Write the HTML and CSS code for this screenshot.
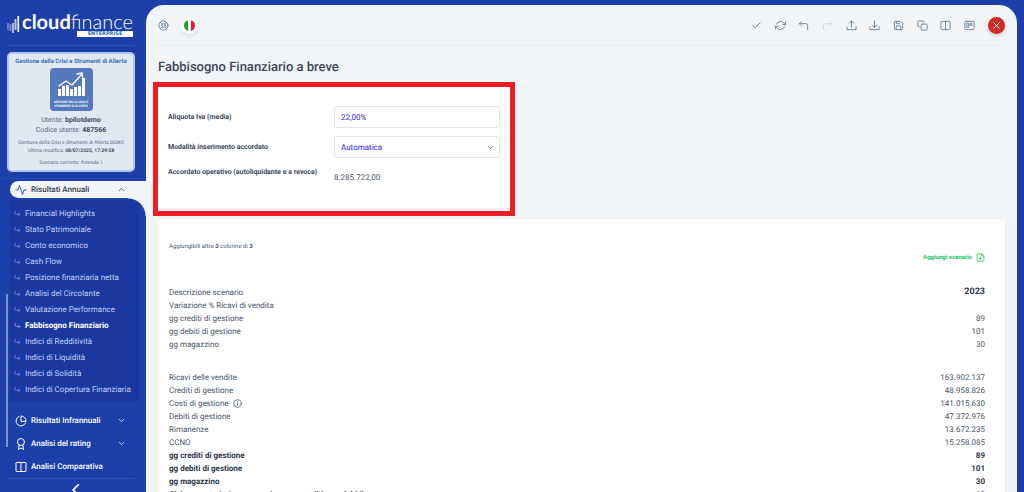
FILE: index.html
```html
<!DOCTYPE html>
<html lang="it">
<head>
    <meta charset="UTF-8">
    <meta name="viewport" content="width=device-width, initial-scale=1.0">
    <title>Fabbisogno Finanziario a breve - Cloudfinance</title>
    <link rel="stylesheet" href="styles.css">
</head>
<body>
    <!-- shared icon -->
    <svg width="0" height="0" class="defs">
        <symbol id="sub" viewBox="0 0 24 24"><path d="M15 10l5 5-5 5"/><path d="M4 4v7a4 4 0 0 0 4 4h12"/></symbol>
        <symbol id="down" viewBox="0 0 24 24"><path d="M6 9l6 6 6-6"/></symbol>
    </svg>

    <aside class="sidebar">
        <a href="#" class="logo">
            <svg class="logo-bars" viewBox="0 0 13 18">
                <g fill="#fff">
                    <rect x="0" y="7" width="2" height="7" opacity=".3"/>
                    <rect x="2.5" y="8" width="2" height="7" opacity=".4"/>
                    <rect x="5" y="7" width="2" height="10" opacity=".6"/>
                    <rect x="7.5" y="3" width="2" height="11" opacity=".7"/>
                    <rect x="10.5" y="0" width="1.6" height="16"/>
                </g>
            </svg>
            <span class="logo-name"><b>cloud</b>finance</span>
            <span class="logo-badge">ENTERPRISE</span>
        </a>

        <div class="user-card">
            <h2>Gestione della Crisi e Strumenti di Allerta</h2>
            <div class="product">
                <svg viewBox="0 0 43 30">
                    <g fill="#fff">
                        <rect x="8" y="21" width="3" height="7"/>
                        <rect x="12" y="18" width="3" height="10"/>
                        <rect x="16" y="17" width="3" height="11"/>
                        <rect x="20" y="21" width="3" height="7"/>
                        <rect x="24" y="19" width="3" height="9"/>
                        <rect x="28" y="18" width="3" height="10"/>
                        <rect x="32" y="10" width="3" height="18"/>
                    </g>
                    <path d="M9 18l7-5 6 4 10-11M27 6l5-1 1 6" fill="none" stroke="#fff" stroke-width="1.3"/>
                </svg>
                <span>GESTIONE DELLA CRISI E STRUMENTI DI ALLERTA</span>
            </div>
            <p class="user">Utente: <b>bpilotdemo</b><br>Codice utente: <b>487566</b></p>
            <p class="info">Gestione della Crisi e Strumenti di Allerta DEMO<br>Ultima modifica: <b>08/07/2025, 17:29:58</b></p>
            <p class="info">Scenario corrente: Azienda 1</p>
        </div>

        <nav class="menu">
            <a href="#" class="menu-item open">
                <svg class="icon" viewBox="0 0 24 24"><path d="M22 12h-4l-3 9L9 3l-3 9H2"/></svg>
                <span>Risultati Annuali</span>
                <svg class="arrow" viewBox="0 0 24 24"><path d="M6 15l6-6 6 6"/></svg>
            </a>
            <div class="submenu">
                <a href="#"><svg><use href="#sub"/></svg>Financial Highlights</a>
                <a href="#"><svg><use href="#sub"/></svg>Stato Patrimoniale</a>
                <a href="#"><svg><use href="#sub"/></svg>Conto economico</a>
                <a href="#"><svg><use href="#sub"/></svg>Cash Flow</a>
                <a href="#"><svg><use href="#sub"/></svg>Posizione finanziaria netta</a>
                <a href="#"><svg><use href="#sub"/></svg>Analisi del Circolante</a>
                <a href="#"><svg><use href="#sub"/></svg>Valutazione Performance</a>
                <a href="#" class="active"><svg><use href="#sub"/></svg>Fabbisogno Finanziario</a>
                <a href="#"><svg><use href="#sub"/></svg>Indici di Redditività</a>
                <a href="#"><svg><use href="#sub"/></svg>Indici di Liquidità</a>
                <a href="#"><svg><use href="#sub"/></svg>Indici di Solidità</a>
                <a href="#"><svg><use href="#sub"/></svg>Indici di Copertura Finanziaria</a>
            </div>
            <a href="#" class="menu-item">
                <svg class="icon" viewBox="0 0 24 24"><path d="M21.2 15.9A10 10 0 1 1 8 2.8"/><path d="M22 12A10 10 0 0 0 12 2v10z"/></svg>
                <span>Risultati Infrannuali</span>
                <svg class="arrow"><use href="#down"/></svg>
            </a>
            <a href="#" class="menu-item">
                <svg class="icon" viewBox="0 0 24 24"><circle cx="12" cy="8" r="7"/><path d="M8.2 13.9L7 23l5-3 5 3-1.2-9.1"/></svg>
                <span>Analisi del rating</span>
                <svg class="arrow"><use href="#down"/></svg>
            </a>
            <a href="#" class="menu-item">
                <svg class="icon" viewBox="0 0 24 24"><rect x="2" y="3" width="20" height="18" rx="1"/><path d="M12 3v18"/></svg>
                <span>Analisi Comparativa</span>
            </a>
            <div class="scrollbar"></div>
        </nav>
        <button class="collapse" aria-label="Riduci menu">
            <svg viewBox="0 0 24 24"><path d="M16 3l-9 9 9 9"/></svg>
        </button>
    </aside>

    <main class="content">
        <header class="topbar">
            <button aria-label="Aiuto">
                <svg viewBox="0 0 24 24"><circle cx="12" cy="12" r="10"/><circle cx="12" cy="12" r="4"/><path d="M4.9 4.9l4.3 4.3M14.8 14.8l4.3 4.3M14.8 9.2l4.3-4.3M4.9 19.1l4.3-4.3"/></svg>
            </button>
            <button class="flag" aria-label="Italiano"><span></span></button>
            <div class="tools">
                <button aria-label="Conferma"><svg viewBox="0 0 24 24"><path d="M20 6L9 17l-5-5"/></svg></button>
                <button aria-label="Aggiorna"><svg viewBox="0 0 24 24"><path d="M23 4v6h-6M1 20v-6h6"/><path d="M3.5 9a9 9 0 0 1 14.9-3.4L23 10M1 14l4.6 4.4A9 9 0 0 0 20.5 15"/></svg></button>
                <button aria-label="Annulla"><svg viewBox="0 0 24 24"><path d="M8 13L3 8l5-5"/><path d="M21 21v-9a4 4 0 0 0-4-4H3"/></svg></button>
                <button aria-label="Ripeti" disabled><svg viewBox="0 0 24 24"><path d="M16 13l5-5-5-5"/><path d="M3 21v-9a4 4 0 0 1 4-4h14"/></svg></button>
                <button aria-label="Carica"><svg viewBox="0 0 24 24"><path d="M22 15v6H2v-6M17 7l-5-5-5 5M12 2v14"/></svg></button>
                <button aria-label="Scarica"><svg viewBox="0 0 24 24"><path d="M22 15v6H2v-6M7 11l5 5 5-5M12 16V2"/></svg></button>
                <button aria-label="Salva"><svg viewBox="0 0 24 24"><path d="M19 21H5a2 2 0 0 1-2-2V5a2 2 0 0 1 2-2h11l5 5v11a2 2 0 0 1-2 2z"/><path d="M17 21v-8H7v8M7 3v5h8"/></svg></button>
                <button aria-label="Copia"><svg viewBox="0 0 24 24"><rect x="9" y="9" width="13" height="13" rx="2"/><path d="M5 15H4a2 2 0 0 1-2-2V4a2 2 0 0 1 2-2h9a2 2 0 0 1 2 2v1"/></svg></button>
                <button aria-label="Colonne"><svg viewBox="0 0 24 24"><rect x="2" y="3" width="20" height="18" rx="2"/><path d="M12 3v18"/></svg></button>
                <button aria-label="Bacheca"><svg viewBox="0 0 24 24"><rect x="2" y="3" width="20" height="18" rx="2"/><path d="M7 7h3v9H7zM14 7h3v5h-3z"/></svg></button>
            </div>
            <button class="close" aria-label="Chiudi"><svg viewBox="0 0 24 24"><path d="M18 6L6 18M6 6l12 12"/></svg></button>
        </header>

        <h1>Fabbisogno Finanziario a breve</h1>

        <form class="params">
            <label for="iva">Aliquota Iva (media)</label>
            <input type="text" id="iva" value="22,00%">
            <label for="modo">Modalità inserimento accordato</label>
            <div class="select">
                <select id="modo">
                    <option>Automatica</option>
                    <option>Manuale</option>
                </select>
                <svg><use href="#down"/></svg>
            </div>
            <label for="accordato">Accordato operativo (autoliquidante e a revoca)</label>
            <output id="accordato">8.285.722,00</output>
        </form>

        <section class="card">
            <p class="note">Aggiungibili altre <b>3</b> colonne di <b>3</b></p>
            <button class="add">Aggiungi scenario
                <svg viewBox="0 0 24 24"><path d="M15 2H5a2 2 0 0 0-2 2v16a2 2 0 0 0 2 2h14a2 2 0 0 0 2-2V8z"/><path d="M15 2v6h6M12 11v7M8.500 14.500h7"/></svg>
            </button>
            <table>
                <tbody>
                    <tr class="year"><th>Descrizione scenario</th><td>2023</td></tr>
                    <tr><th>Variazione % Ricavi di vendita</th><td></td></tr>
                    <tr><th>gg crediti di gestione</th><td>89</td></tr>
                    <tr><th>gg debiti di gestione</th><td>101</td></tr>
                    <tr><th>gg magazzino</th><td>30</td></tr>
                </tbody>
                <tbody>
                    <tr class="gap"><td colspan="2"></td></tr>
                    <tr><th>Ricavi delle vendite</th><td>163.902.137</td></tr>
                    <tr><th>Crediti di gestione</th><td>48.958.826</td></tr>
                    <tr><th>Costi di gestione <svg viewBox="0 0 24 24"><circle cx="12" cy="12" r="10"/><path d="M12 17v-6M12 8V7"/></svg></th><td>141.015.630</td></tr>
                    <tr><th>Debiti di gestione</th><td>47.372.976</td></tr>
                    <tr><th>Rimanenze</th><td>13.672.235</td></tr>
                    <tr><th>CCNO</th><td>15.258.085</td></tr>
                    <tr class="strong"><th>gg crediti di gestione</th><td>89</td></tr>
                    <tr class="strong"><th>gg debiti di gestione</th><td>101</td></tr>
                    <tr class="strong"><th>gg magazzino</th><td>30</td></tr>
                    <tr class="strong"><th>Ciclo monetario (gg magazzino + gg crediti - gg debiti)</th><td>18</td></tr>
                </tbody>
            </table>
        </section>
    </main>
</body>
</html>
```
FILE: styles.css
```css
* {
    box-sizing: border-box;
}
body {
    margin: 0;
    height: 100vh;
    display: flex;
    overflow: hidden;
    background-color: #1c3faa;
    font-family: Roboto, "Liberation Sans", sans-serif;
    font-size: 8px;
    line-height: 13px;
    color: #4a5568;
    text-rendering: geometricPrecision;
}
svg {
    fill: none;
    stroke: currentColor;
    stroke-width: 2;
    stroke-linecap: round;
    stroke-linejoin: round;
    flex-shrink: 0;
}
.defs {
    position: absolute;
}
a {
    color: inherit;
    text-decoration: none;
}
button {
    padding: 0;
    border: none;
    background: none;
    color: inherit;
    font: inherit;
    cursor: pointer;
    text-rendering: inherit;
}
h1, h2, p {
    margin: 0;
}

/* sidebar */
.sidebar {
    width: 146px;
    flex-shrink: 0;
    color: #fff;
    display: flex;
    flex-direction: column;
}
.sidebar > * {
    flex-shrink: 0;
}
.logo {
    position: relative;
    display: flex;
    height: 46px;
    margin: 0 11px 0 7px;
    padding-top: 12px;
    border-bottom: 1px solid #3151b3;
}
.logo-bars {
    width: 13px;
    height: 18px;
    margin-top: 4px;
    stroke: none;
}
.logo-name {
    margin-left: 2px;
    font-family: Lato, sans-serif;
    font-size: 20px;
    line-height: 20px;
    font-weight: 300;
}
.logo-name b {
    font-weight: 700;
}
.logo-badge {
    position: absolute;
    right: 2px;
    bottom: 8px;
    width: 56px;
    background: #fff;
    color: #1c6fb5;
    font: bold 5px/6px "DejaVu Sans", sans-serif;
    text-align: center;
}
.user-card {
    margin: 6px 11px 6px 7px;
    height: 120px;
    padding: 2px 0;
    border: 2px solid #b3c3fb;
    border-radius: 5px;
    background: #e2e8f0;
    color: #5c6a80;
    text-align: center;
    white-space: nowrap;
}
.user-card h2 {
    font-size: 6px;
    line-height: 12px;
    font-weight: 700;
    color: #3575b5;
}
.product {
    display: flex;
    flex-direction: column;
    width: 43px;
    height: 43px;
    margin: 0 auto 4px;
    border-radius: 4px;
    background: #5479bd;
    color: #fff;
    white-space: normal;
}
.product svg {
    width: 43px;
    height: 30px;
    stroke: none;
}
.product span {
    font-size: 3px;
    line-height: 4px;
    font-weight: 700;
    padding-top: 2px;
}
.user {
    font-size: 7px;
    line-height: 10px;
}
.user b, .info b {
    color: #3f4b5e;
}
.info {
    margin-top: 4px;
    font-size: 5px;
    line-height: 8px;
}
.menu {
    position: relative;
    padding: 2px 0 0 10px;
    border-top: 1px solid #2848ae;
    font-size: 8px;
}
.menu-item {
    display: flex;
    align-items: center;
    height: 23px;
    padding-left: 5px;
    font-weight: 500;
}
.menu-item span {
    width: 86px;
    margin-left: 4px;
}
.menu-item .icon {
    width: 12px;
    height: 12px;
}
.menu-item .arrow {
    width: 9px;
    height: 9px;
}
.menu-item.open {
    position: relative;
    height: 17px;
    border-radius: 9px 0 0 9px;
    background: #f1f5f8;
    color: #2d3748;
}
.menu-item.open .icon {
    color: #3056c9;
}
/* rounded join between the open tab and the page */
.menu-item.open::after {
    content: "";
    position: absolute;
    right: 0;
    top: 100%;
    width: 18px;
    height: 18px;
    background: radial-gradient(circle at 0 100%, transparent 17px, #f1f5f8 18px);
}
.submenu {
    margin: 2px 7px 7px 0;
    padding: 5px 0;
    border-radius: 3px;
    background: #1b38a0;
    color: #c3cff4;
}
.submenu a {
    display: flex;
    align-items: center;
    height: 16px;
    padding-left: 4px;
}
.submenu svg {
    width: 7px;
    height: 7px;
    margin-right: 4px;
    opacity: .7;
}
.submenu .active {
    color: #fff;
    font-weight: 700;
}
.scrollbar {
    position: absolute;
    left: 6px;
    top: 115px;
    width: 2px;
    height: 153px;
    background: #7b90d0;
}
.collapse {
    margin: 0 11px 0 7px;
    padding: 4px 0 0 10px;
    border-top: 1px solid #3151b3;
}
.collapse svg {
    width: 14px;
    height: 14px;
    stroke-width: 3;
}

/* page */
.content {
    flex: 1;
    display: flex;
    flex-direction: column;
    min-width: 0;
    margin: 5px 7px 0 0;
    padding: 0 12px;
    border-radius: 18px 18px 0 0;
    background: #f1f5f8;
}
.topbar {
    display: flex;
    align-items: center;
    height: 41px;
    flex-shrink: 0;
    border-bottom: 1px solid #e9eef2;
    color: #64839b;
}
.topbar button {
    display: flex;
    align-items: center;
    justify-content: center;
}
.topbar svg {
    width: 11px;
    height: 11px;
}
.topbar .flag {
    width: 17px;
    height: 17px;
    margin-left: 12px;
    border-radius: 50%;
    background: #fff;
    box-shadow: 0 2px 4px rgba(0, 0, 0, 0.1);
}
.flag span {
    width: 11px;
    height: 11px;
    border-radius: 50%;
    background: linear-gradient(to right, #17a61f 4px, #fff 4px 7px, #f5103b 7px);
}
.tools {
    display: flex;
    justify-content: space-between;
    width: 224px;
    margin-left: auto;
}
.tools button:disabled {
    opacity: .25;
}
.topbar .close {
    width: 17px;
    height: 17px;
    margin-left: 13px;
    border-radius: 50%;
    background: #d32929;
    color: #fff;
    box-shadow: 0 2px 4px rgba(0, 0, 0, 0.15);
}
h1 {
    margin: 13px 0 6px;
    font-size: 13px;
    line-height: 17px;
    font-weight: 500;
    color: #3c4759;
}
.params {
    display: grid;
    grid-template-columns: 166px 166px;
    grid-template-rows: 22px 22px 22px;
    row-gap: 8px;
    align-items: center;
    align-self: flex-start;
    width: 362px;
    height: 134px;
    margin: 0 0 3px -5px;
    padding: 19px 10px;
    border: 5px solid #ee1c25;
    background: #fff;
    box-shadow: inset 0 -3px #edf1f4;
    flex-shrink: 0;
}
.params label {
    font-size: 7px;
    font-weight: 700;
    color: #3c4759;
    white-space: nowrap;
}
.params label:nth-of-type(3) {
    align-self: start;
}
.params input, .params select {
    width: 100%;
    height: 22px;
    padding: 0 6px;
    border: 1px solid #dde3ea;
    border-radius: 3px;
    background: #fff;
    color: #2b22ee;
    font: inherit;
    text-rendering: inherit;
    appearance: none;
}
.select {
    position: relative;
}
.select svg {
    position: absolute;
    right: 5px;
    top: 7px;
    width: 9px;
    height: 9px;
}
.card {
    flex: 1;
    display: flex;
    flex-direction: column;
    padding: 21px 20px 0 11px;
    border-radius: 3px 3px 0 0;
    background: #fff;
    box-shadow: 0 1px 8px rgba(0, 0, 0, 0.04);
}
.note {
    font-size: 6px;
}
.add {
    display: flex;
    align-items: center;
    align-self: flex-end;
    gap: 4px;
    font-size: 6px;
    line-height: 9px;
    font-weight: 700;
    color: #22c25f;
}
.add svg {
    width: 9px;
    height: 9px;
}
table {
    width: 100%;
    margin-top: 23px;
    border-collapse: collapse;
}
th, td {
    height: 13px;
    padding: 0;
    text-align: left;
    font-weight: 400;
    white-space: nowrap;
}
th svg {
    width: 9px;
    height: 9px;
    margin-left: 2px;
    vertical-align: middle;
}
td {
    text-align: right;
}
.year td {
    height: 14px;
    font-size: 9px;
    font-weight: 700;
    color: #2d3748;
}
.gap td {
    height: 20px;
}
.strong th, .strong td {
    font-weight: 700;
    color: #2d3748;
}
```
